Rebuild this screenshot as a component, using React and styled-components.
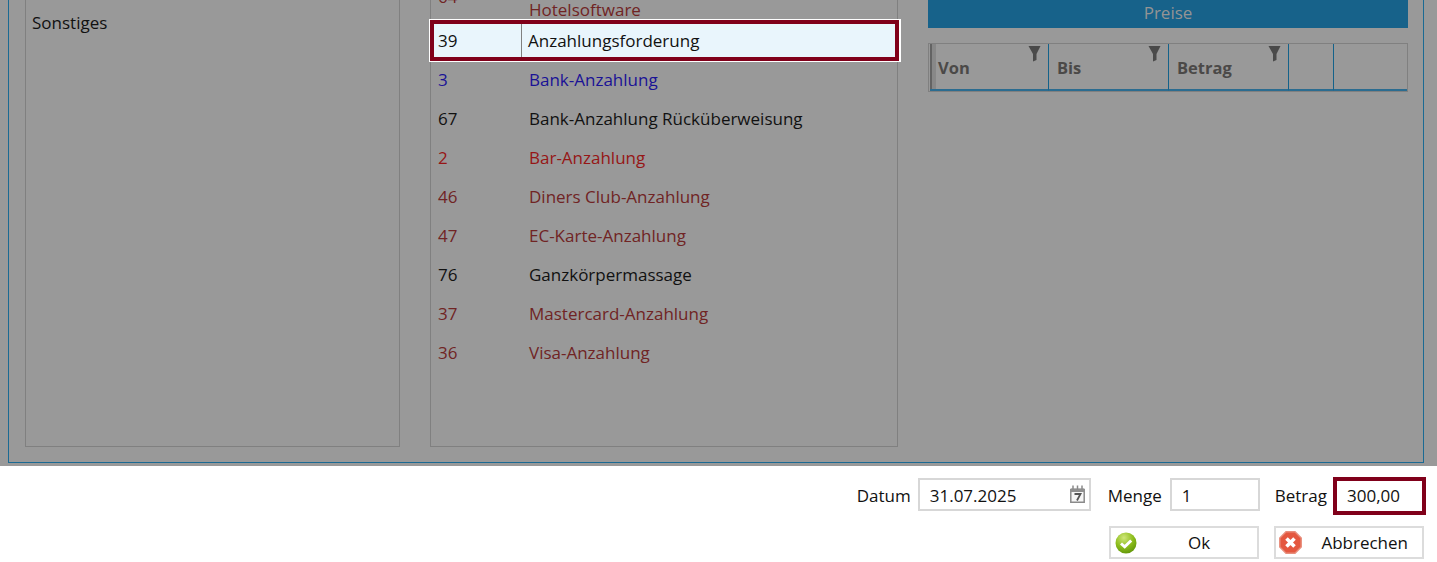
import React from "react";
import styled, { createGlobalStyle } from "styled-components";

const Global = createGlobalStyle`
  html, body { margin: 0; padding: 0; background: #fff; }
  body { font-family: "Open Sans", "Noto Sans", sans-serif; overflow: hidden; }
`;
const Page = styled.div`width: 1437px; height: 562px; overflow: hidden; display: flex; flex-direction: column;`;
const Dimmed = styled.div`height: 466px; background: #999; padding: 0 13px 3px 8px; box-sizing: border-box; flex: none;`;
const Frame = styled.div`
  height: 463px; box-sizing: border-box; border: 1px solid #1b6a93; border-top: 0;
  padding: 0 15px 15px 16px; display: flex; color: #111;
`;
const Panel = styled.div`
  box-sizing: border-box; border: 1px solid #808080; border-top: 0; flex: none; width: ${p => p.$w}px; margin-right: ${p => p.$mr}px;
`;
const ListPanel = styled(Panel)`position: relative;`;
const Clip = styled.div`margin-top: -40px;`;
const GroupText = styled.div`font-size: 17px; line-height: 24px; padding: 11px 0 0 6px;`;
const Row = styled.div`
  height: ${p => p.$h || 39}px; display: flex; align-items: center;
  font-size: 17px; color: ${p => p.$c};
`;
const Num = styled.div`width: 91px; padding-left: 7px; box-sizing: border-box; flex: none;`;
const TopNum = styled(Num)`align-self: flex-start; padding-top: 25px;`;
const Name = styled.div`padding-left: 7px; white-space: nowrap;`;
const Wrapped = styled(Name)`align-self: flex-end; line-height: 22px; margin-bottom: -2px;`;
const Selected = styled.div`
  position: relative; height: 43px; margin: 0 -4px -2px -2px; box-sizing: border-box;
  border-style: solid; border-color: #fff; border-width: 1px 2px 1px 1px; display: flex;
`;
const SelInner = styled.div`
  flex: 1; display: flex; align-items: center; border: 4px solid #80001a; background: #e9f5fc; color: #111; font-size: 17px;
`;
const SelNum = styled.div`width: 88px; padding-left: 4px; box-sizing: border-box; height: 100%; display: flex; align-items: center; border-right: 1px solid #808080;`;
const SelName = styled.div`padding-left: 6px;`;
const Right = styled.div`flex: none; width: 480px; display: flex; flex-direction: column;`;
const Bar = styled.div`
  height: 28px; background: #17628a; color: #949494; font-size: 17px; text-align: center; line-height: 26px; flex: none;
`;
const Table = styled.div`
  margin-top: 15px; height: 49px; box-sizing: border-box; border: 1px solid #808080; display: flex;
  padding-left: 1px;
`;
const Grip = styled.div`width: 6px; background: #888; border-left: 2px solid #636363; box-sizing: border-box; margin-right: -6px; flex: none; margin-bottom: 1px;`;
const Col = styled.div`
  width: ${p => p.$w}px; flex: ${p => (p.$w ? "none" : 1)}; box-sizing: border-box; position: relative;
  border-bottom: 2px solid #2b6c90; border-right: ${p => (p.$w ? "1px solid #14628a" : "0")};
  font-weight: 700; font-size: 16.5px; color: #4b4948; padding: 12px 0 0 8px;
`;
const FilterIcon = styled.svg`position: absolute; right: 7px; top: 2px;`;
const Footer = styled.div`flex: 1; display: flex; flex-direction: column; align-items: flex-end; padding: 11px 11px 0 0; color: #111;`;
const FieldRow = styled.div`display: flex; align-items: flex-start; height: 38px; font-size: 17px;`;
const Label = styled.div`margin-right: ${p => p.$mr}px; margin-left: ${p => p.$ml || 0}px; line-height: 37px;`;
const Input = styled.div`
  width: ${p => p.$w}px; height: 33px; margin-top: 1px; box-sizing: border-box; border: 2px solid #d7d7d7; padding: 2px 0 0 10px;
  display: flex; align-items: center; justify-content: space-between;
`;
const RedInput = styled(Input)`height: 38px; margin-top: 0; border: 4px solid #80001a; padding: 0 0 1px 10px;`;
const CalIcon = styled.svg`margin: -3px 4px 0 0; flex: none;`;
const Buttons = styled.div`display: flex; gap: 15px; margin-top: 11px; padding-right: 2px;`;
const Button = styled.div`
  width: 150px; height: 33px; box-sizing: border-box; border: 2px solid #dcdcdc; position: relative; font-size: 17px;
  display: flex; align-items: center; justify-content: ${p => (p.$end ? "flex-end" : "center")};
  padding-right: ${p => (p.$end ? "14px" : "0")};
  padding-left: ${p => (p.$end ? "0" : "30px")};
`;
const OkSvg = styled.svg`position: absolute; left: 4px; top: 4px;`;
const CancelSvg = styled.svg`position: absolute; left: 3px; top: 3px;`;

const rows = [
  ["3", "Bank-Anzahlung", "#1a1296"],
  ["67", "Bank-Anzahlung Rücküberweisung", "#111"],
  ["2", "Bar-Anzahlung", "#961616"],
  ["46", "Diners Club-Anzahlung", "#702424"],
  ["47", "EC-Karte-Anzahlung", "#702424"],
  ["76", "Ganzkörpermassage", "#111"],
  ["37", "Mastercard-Anzahlung", "#702424"],
  ["36", "Visa-Anzahlung", "#702424"],
];

const Filter = () => (
  <FilterIcon width="13" height="16" viewBox="0 0 13 16">
    <path d="M0.500 0h12L8.500 8V14L5 15.500V8z" fill="#4a4a4a" />
  </FilterIcon>
);

const Calendar = () => (
  <CalIcon width="15" height="18" viewBox="0 0 15 18">
    <path d="M0.800 4.500h13.400v12.700H0.800z" fill="#f6f6f6" stroke="#8a8a8a" strokeWidth="1.500" />
    <path d="M1 3.500h13v3.500H1z" fill="#8f8f8f" />
    <path d="M3 0.500v4M7.500 0.500v4M12 0.500v4" stroke="#8a8a8a" strokeWidth="1.500" />
    <path d="M4.500 9h6L7 15.500" fill="none" stroke="#555" strokeWidth="1.800" />
  </CalIcon>
);

const OkIcon = () => (
  <OkSvg width="22" height="22" viewBox="0 0 22 22">
    <defs>
      <radialGradient id="okFill" cx="40%" cy="25%" r="80%">
        <stop offset="0" stopColor="#cfe67a" />
        <stop offset="0.55" stopColor="#8dbd1c" />
        <stop offset="1" stopColor="#5f9408" />
      </radialGradient>
    </defs>
    <circle cx="11" cy="11" r="10.500" fill="url(#okFill)" />
    <path d="M6 11.500l3.700 3.300 6.500-6.300" fill="none" stroke="#fff" strokeWidth="3" />
  </OkSvg>
);

const CancelIcon = () => (
  <CancelSvg width="23" height="23" viewBox="0 0 23 23">
    <path d="M7 0.800h9L22.200 7v9L16 22.200H7L0.800 16V7z" fill="#e4573f" stroke="#e88e7c" strokeWidth="1.500" />
    <path d="M7.500 7.500l8 8M15.500 7.500l-8 8" stroke="#fff" strokeWidth="3.600" />
  </CancelSvg>
);

export default function App() {
  return (
    <Page>
      <Global />
      <Dimmed>
        <Frame>
          <Panel $w={375} $mr={30}>
            <GroupText>Sonstiges</GroupText>
          </Panel>
          <ListPanel $w={468} $mr={30}>
            <Clip>
              <Row $h={59} $c="#702424">
                <TopNum>64</TopNum>
                <Wrapped>Hotelsoftware</Wrapped>
              </Row>
              <Selected>
                <SelInner>
                  <SelNum>39</SelNum>
                  <SelName>Anzahlungsforderung</SelName>
                </SelInner>
              </Selected>
              {rows.map(([n, t, c]) => (
                <Row key={n} $c={c}>
                  <Num>{n}</Num>
                  <Name>{t}</Name>
                </Row>
              ))}
            </Clip>
          </ListPanel>
          <Right>
            <Bar>Preise</Bar>
            <Table>
              <Grip />
              <Col $w={119}>Von<Filter /></Col>
              <Col $w={120}>Bis<Filter /></Col>
              <Col $w={120}>Betrag<Filter /></Col>
              <Col $w={45} />
              <Col />
            </Table>
          </Right>
        </Frame>
      </Dimmed>
      <Footer>
        <FieldRow>
          <Label $mr={7}>Datum</Label>
          <Input $w={173}>31.07.2025<Calendar /></Input>
          <Label $ml={17} $mr={8}>Menge</Label>
          <Input $w={90}>1</Input>
          <Label $ml={15} $mr={6}>Betrag</Label>
          <RedInput $w={93}>300,00</RedInput>
        </FieldRow>
        <Buttons>
          <Button><OkIcon />Ok</Button>
          <Button $end><CancelIcon />Abbrechen</Button>
        </Buttons>
      </Footer>
    </Page>
  );
}
